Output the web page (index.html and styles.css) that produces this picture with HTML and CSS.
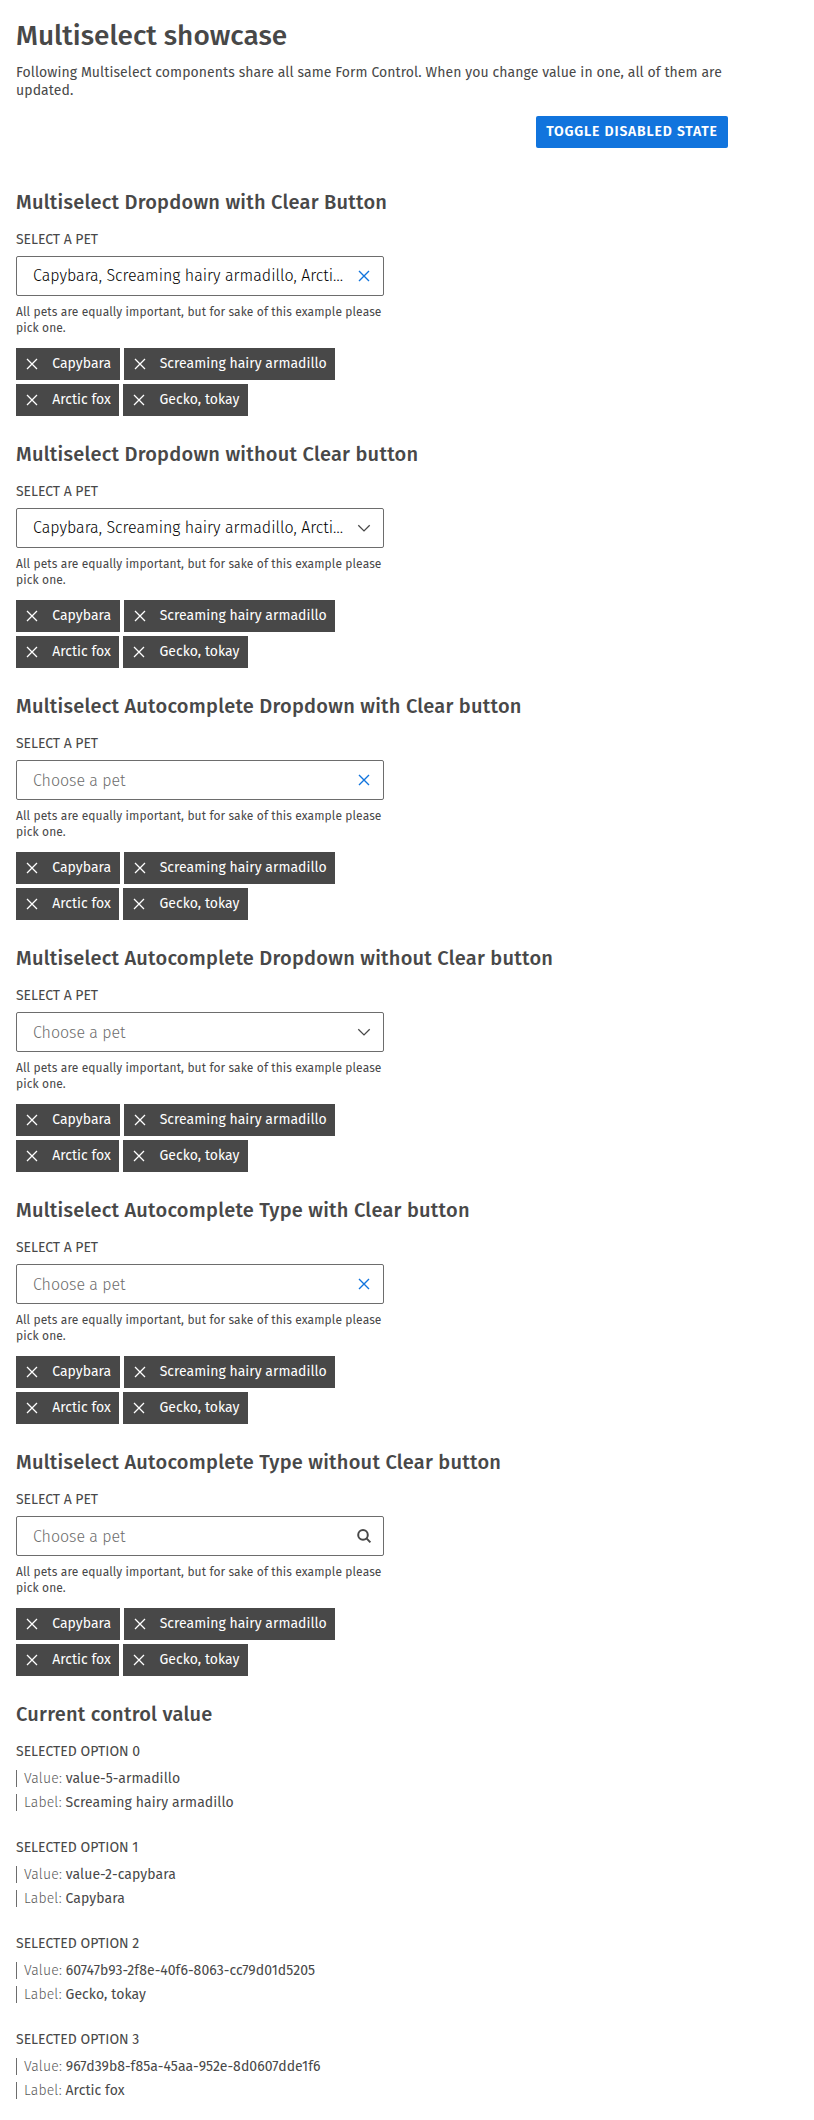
FILE: index.html
```html
<!DOCTYPE html>
<html lang="en">
<head>
<meta charset="utf-8">
<title>Multiselect showcase</title>
<link rel="stylesheet" href="styles.css">
</head>
<body>
<svg class="sprite" aria-hidden="true">
  <symbol id="cross" viewBox="0 0 16 16"><path d="M3 3l10 10M13 3L3 13"/></symbol>
  <symbol id="chevron" viewBox="0 0 16 16"><path d="M2.3 5.2L8 10.9l5.7-5.7"/></symbol>
  <symbol id="search" viewBox="0 0 16 16"><circle cx="7" cy="6.9" r="4.8"/><path d="M10.5 10.4l3.9 4"/></symbol>
</svg>
<main class="page">
  <h1 class="title">Multiselect showcase</h1>
  <p class="intro">Following Multiselect components share all same Form Control. When you change value in one, all of them are updated.</p>
  <div class="actions"><button class="button" type="button">TOGGLE DISABLED STATE</button></div>
  <div id="sections"></div>
  <section>
    <h2 class="heading">Current control value</h2>
    <div id="values"></div>
  </section>
</main>
<script src="app.js"></script>
</body>
</html>
```
FILE: styles.css
```css
* { box-sizing: border-box; }
body { margin: 0; background: #fff; color: #484848; font-family: "Fira Sans", "Noto Sans", sans-serif; font-size: 14px; font-weight: 400; line-height: 18px; }
.sprite { display: none; }
.page { width: 728px; padding: 20px 0 0 16px; }
.title { margin: 0; font-size: 28px; line-height: 32px; font-weight: 500; }
.intro { margin: 12px 0 0; letter-spacing: .083px; }
.actions { display: flex; justify-content: flex-end; margin: 16px 0 42px; }
.button { width: 192px; height: 32px; padding: 0; border: 0; border-radius: 2px; background: #1174dd; color: #fff; font: inherit; font-weight: 600; letter-spacing: .83px; white-space: nowrap; }
.section { height: 252px; }
.heading { margin: 0; font-size: 20px; line-height: 24px; font-weight: 500; letter-spacing: .24px; white-space: nowrap; }
.label { margin-top: 17px; line-height: 18px; letter-spacing: -.05px; }
.field { display: flex; align-items: center; justify-content: space-between; width: 368px; height: 40px; margin-top: 7px; padding: 0 11px 0 16px; border: 1px solid #6d6d6d; border-radius: 2px; font-size: 16px; font-weight: 300; line-height: 20px; color: #000; white-space: nowrap; }
.placeholder { padding-top: 2px; color: #6d6d6d; letter-spacing: -.05px; }
.icon { width: 16px; height: 16px; fill: none; stroke: currentColor; flex: none; }
.field .cross { color: #1174dd; stroke-width: 1.4; }
.field .chevron { color: #484848; stroke-width: 1.3; }
.field .search { color: #484848; stroke-width: 2; }
.hint { width: 368px; margin-top: 8px; font-size: 12px; line-height: 16px; letter-spacing: .1px; }
.chips { display: flex; flex-wrap: wrap; gap: 4px; width: 368px; margin-top: 12px; }
.chip { display: flex; align-items: center; height: 32px; padding: 0 8.4px 0 8px; background: #484848; color: #fff; letter-spacing: .02px; }
.chip .icon { margin-right: 12.2px; stroke-width: 1.3; }
.option { margin-top: 16px; height: 80px; }
.option-title { margin-bottom: 9px; padding-top: 1px; }
.row { height: 17px; line-height: 17px; margin-bottom: 7px; padding-left: 7px; border-left: 1px solid #6d6d6d; letter-spacing: .07px; white-space: nowrap; }
.key { color: #5c5c5c; font-weight: 300; letter-spacing: .17px; }
```
FILE: app.js
```js
const icon = name => `<svg class="icon ${name}"><use href="#${name}"/></svg>`;
const pets = ["Capybara", "Screaming hairy armadillo", "Arctic fox", "Gecko, tokay"];
const selected = '<span>Capybara, Screaming hairy armadillo, Arcti…</span>';
const empty = '<span class="placeholder">Choose a pet</span>';

const sections = [
  ["Multiselect Dropdown with Clear Button", selected, "cross"],
  ["Multiselect Dropdown without Clear button", selected, "chevron"],
  ["Multiselect Autocomplete Dropdown with Clear button", empty, "cross"],
  ["Multiselect Autocomplete Dropdown without Clear button", empty, "chevron"],
  ["Multiselect Autocomplete Type with Clear button", empty, "cross"],
  ["Multiselect Autocomplete Type without Clear button", empty, "search"],
];

document.getElementById("sections").innerHTML = sections.map(([title, content, name]) => `
  <section class="section">
    <h2 class="heading">${title}</h2>
    <div class="label">SELECT A PET</div>
    <div class="field">${content}${icon(name)}</div>
    <div class="hint">All pets are equally important, but for sake of this example please pick one.</div>
    <div class="chips">${pets.map(p => `<div class="chip">${icon("cross")}<span>${p}</span></div>`).join("")}</div>
  </section>`).join("");

const values = [
  ["value-5-armadillo", "Screaming hairy armadillo"],
  ["value-2-capybara", "Capybara"],
  ["60747b93-2f8e-40f6-8063-cc79d01d5205", "Gecko, tokay"],
  ["967d39b8-f85a-45aa-952e-8d0607dde1f6", "Arctic fox"],
];

document.getElementById("values").innerHTML = values.map(([value, label], i) => `
  <div class="option">
    <div class="option-title">SELECTED OPTION ${i}</div>
    <div class="row"><span class="key">Value:</span> ${value}</div>
    <div class="row"><span class="key">Label:</span> ${label}</div>
  </div>`).join("");
```
